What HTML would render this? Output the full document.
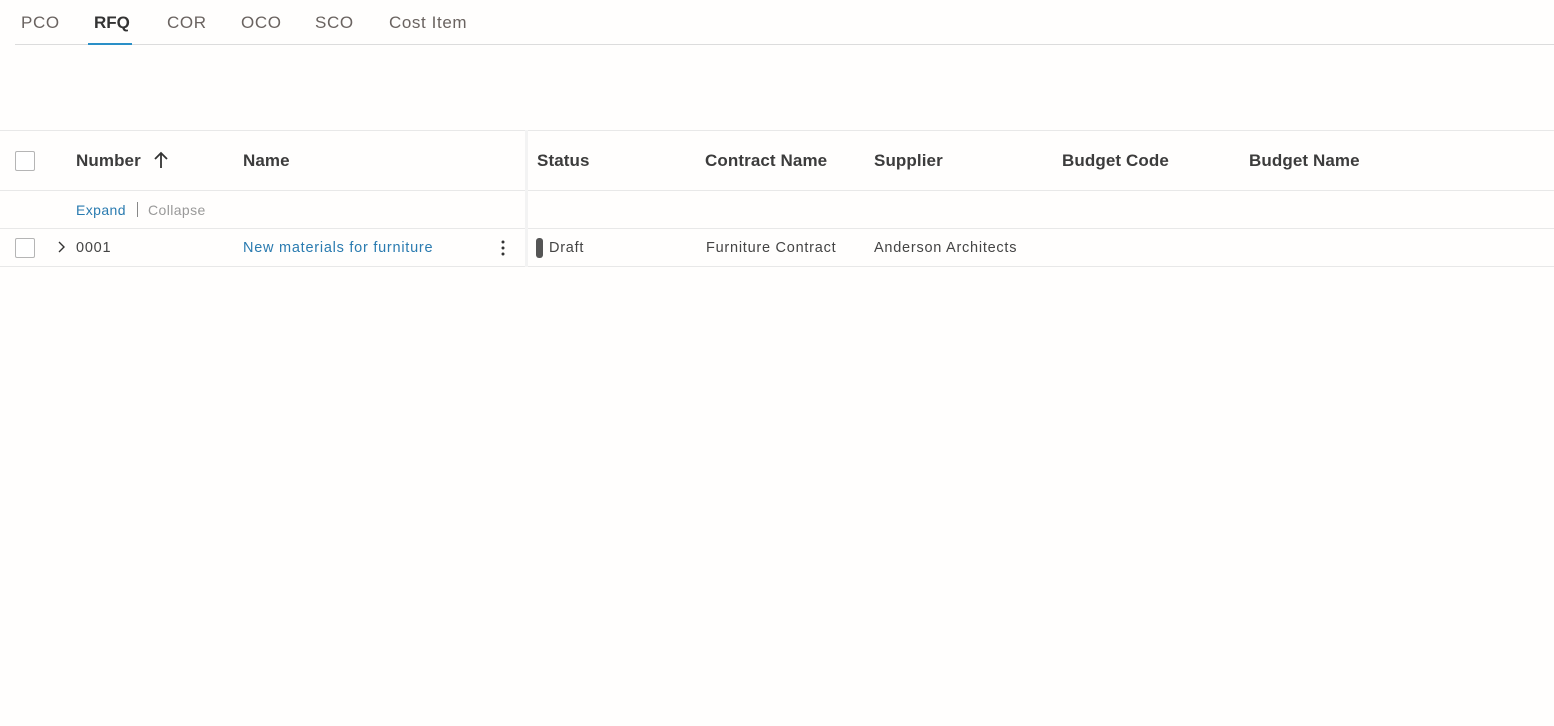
<!DOCTYPE html>
<html><head><style>
body{margin:0;width:1554px;height:726px;background:#fffefd;font-family:"Liberation Sans",sans-serif;position:relative;overflow:hidden}
.a{position:absolute;white-space:nowrap}
.tab{top:13px;font-size:17px;color:#6a6360;letter-spacing:0.6px}
.hd{top:151px;font-size:17px;color:#3c3c3c;font-weight:bold;letter-spacing:0.1px}
.cell{top:240px;font-size:14.5px;color:#444;letter-spacing:0.75px}
.line{position:absolute;height:1px;background:#e8e8e8}
.cb{position:absolute;width:18px;height:18px;border:1px solid #b5b5b5;border-radius:2px;background:#fff}
</style></head><body>
<div class="a tab" style="left:21px">PCO</div>
<div class="a tab" style="left:94px;color:#333;font-weight:bold;letter-spacing:0">RFQ</div>
<div class="a tab" style="left:167px">COR</div>
<div class="a tab" style="left:241px">OCO</div>
<div class="a tab" style="left:315px">SCO</div>
<div class="a tab" style="left:389px">Cost Item</div>
<div class="line" style="left:15px;top:44px;width:1539px;background:#dcdcdc"></div>
<div style="position:absolute;left:88px;top:43px;width:44px;height:2px;background:#2a8fc7"></div>

<div class="line" style="left:0;top:130px;width:1554px"></div>
<div class="line" style="left:0;top:190px;width:1554px"></div>
<div class="line" style="left:0;top:228px;width:1554px"></div>
<div class="line" style="left:0;top:266px;width:1554px"></div>
<div style="position:absolute;left:525px;top:130px;width:3px;height:137px;background:#f3f3f3"></div>

<div class="cb" style="left:15px;top:151px"></div>
<div class="a hd" style="left:76px">Number</div>
<svg class="a" style="left:152px;top:151px" width="18" height="18" viewBox="0 0 18 18"><path d="M9 17V2M3 8l6-6 6 6" fill="none" stroke="#333" stroke-width="1.8"/></svg>
<div class="a hd" style="left:243px">Name</div>
<div class="a hd" style="left:537px">Status</div>
<div class="a hd" style="left:705px">Contract Name</div>
<div class="a hd" style="left:874px">Supplier</div>
<div class="a hd" style="left:1062px">Budget Code</div>
<div class="a hd" style="left:1249px">Budget Name</div>

<div class="a" style="left:76px;top:202px;font-size:14px;color:#2a7bb0;letter-spacing:0.4px">Expand</div>
<div style="position:absolute;left:137px;top:202px;width:1px;height:15px;background:#888"></div>
<div class="a" style="left:148px;top:202px;font-size:14px;color:#999;letter-spacing:0.4px">Collapse</div>

<div class="cb" style="left:15px;top:238px"></div>
<svg class="a" style="left:57px;top:241px" width="10" height="12"><path d="M2 1l5 5-5 5" fill="none" stroke="#333" stroke-width="1.4"/></svg>
<div class="a cell" style="left:76px">0001</div>
<div class="a cell" style="left:243px;color:#2a7bb0">New materials for furniture</div>
<svg class="a" style="left:500px;top:239px" width="6" height="18"><circle cx="3" cy="3" r="1.5" fill="#333"/><circle cx="3" cy="9" r="1.5" fill="#333"/><circle cx="3" cy="15" r="1.5" fill="#333"/></svg>
<div style="position:absolute;left:536px;top:238px;width:7px;height:20px;border-radius:3px;background:#555"></div>
<div class="a cell" style="left:549px">Draft</div>
<div class="a cell" style="left:706px">Furniture Contract</div>
<div class="a cell" style="left:874px">Anderson Architects</div>
</body></html>
